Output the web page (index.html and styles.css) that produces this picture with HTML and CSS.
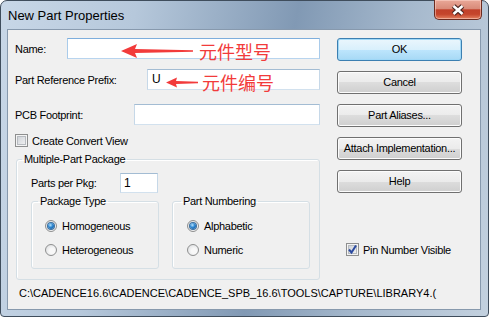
FILE: index.html
```html
<!DOCTYPE html>
<html lang="zh-CN">
<head>
    <meta charset="UTF-8">
    <title>New Part Properties</title>
    <link rel="stylesheet" href="styles.css">
</head>
<body>

<div class="window">
    <div class="titlebar">
        <span class="title">New Part Properties</span>
        <span class="close">
            <svg width="16" height="12" viewBox="0 0 16 12">
                <path d="M3.5 2 L12.5 10 M12.5 2 L3.5 10" stroke="#4a2520" stroke-width="5"/>
                <path d="M3.5 2 L12.5 10 M12.5 2 L3.5 10" stroke="#ffffff" stroke-width="2.6"/>
            </svg>
        </span>
    </div>

    <div class="client">
        <div class="main">
            <div class="form">
                <div class="row">
                    <label>Name:</label>
                    <span class="field field-name"></span>
                </div>
                <div class="row row-prefix">
                    <label>Part Reference Prefix:</label>
                    <span class="field field-prefix">U</span>
                </div>
                <div class="row row-pcb">
                    <label>PCB Footprint:</label>
                    <span class="field field-pcb"></span>
                </div>
                <div class="check-row">
                    <span class="check"></span>
                    <span class="check-text">Create Convert View</span>
                </div>

                <fieldset class="group">
                    <legend>Multiple-Part Package</legend>
                    <div class="pkg-row">
                        <label>Parts per Pkg:</label>
                        <span class="field field-count">1</span>
                    </div>
                    <div class="sub-groups">
                        <fieldset class="sub sub-type">
                            <legend>Package Type</legend>
                            <div class="radio-row first"><span class="radio on"></span>Homogeneous</div>
                            <div class="radio-row"><span class="radio"></span>Heterogeneous</div>
                        </fieldset>
                        <fieldset class="sub sub-num">
                            <legend>Part Numbering</legend>
                            <div class="radio-row first"><span class="radio on"></span>Alphabetic</div>
                            <div class="radio-row"><span class="radio"></span>Numeric</div>
                        </fieldset>
                    </div>
                </fieldset>
            </div>

            <div class="actions">
                <div class="btn btn-default">OK</div>
                <div class="btn">Cancel</div>
                <div class="btn">Part Aliases...</div>
                <div class="btn">Attach Implementation...</div>
                <div class="btn">Help</div>
                <div class="check-row pin-row">
                    <span class="check checked">
                        <svg width="11" height="11" viewBox="0 0 11 11">
                            <path d="M2 5.5 L4.5 8.5 L9 1.5" fill="none" stroke="#2b4aa0" stroke-width="2"/>
                        </svg>
                    </span>
                    <span class="check-text">Pin Number Visible</span>
                </div>
            </div>
        </div>

        <div class="path">C:\CADENCE16.6\CADENCE\CADENCE_SPB_16.6\TOOLS\CAPTURE\LIBRARY4.(</div>
    </div>

    <!-- red notes drawn over the dialog -->
    <div class="note note-name">
        <svg width="72" height="16" viewBox="0 0 72 16">
            <polygon points="0,8 16,1 14,6 72,7.2 72,8.8 14,10 16,15" fill="#f23b3b"/>
        </svg>
        <span>元件型号</span>
    </div>
    <div class="note note-prefix">
        <svg width="32" height="11" viewBox="0 0 32 11">
            <polygon points="0,5.5 11,0.5 10,4 32,4.8 32,6.2 10,7 11,10.5" fill="#f23b3b"/>
        </svg>
        <span>元件编号</span>
    </div>
</div>

</body>
</html>
```

FILE: styles.css
```css
body { margin: 0; background: #fff; font-family: "Liberation Sans", Arial, sans-serif; font-size: 11px; letter-spacing: -0.3px; color: #000; }

.window { position: relative; width: 489px; height: 317px; box-sizing: border-box; padding: 0 7px 0 6px; border: 1px solid #3f4d5c; border-radius: 7px 7px 4px 4px; background: linear-gradient(100deg, #c8d7e7 0%, #b6c8db 25%, #8199b4 55%, #a6b9cd 76%, #c3d1df 100%); }

.titlebar { height: 28px; display: flex; justify-content: space-between; }
.title { padding-left: 1px; margin-top: 7px; font-size: 13px; letter-spacing: 0; line-height: 15px; }
.close { width: 48px; height: 20px; margin: -1px -1px 0 0; box-sizing: border-box; display: flex; align-items: center; justify-content: center; border: 1px solid #6b2b20; border-top: none; border-radius: 0 0 5px 5px; background: linear-gradient(#e9a898 0%, #d98b79 45%, #c1412a 52%, #c5452c 75%, #e3805f 100%); box-shadow: inset 0 0 0 1px rgba(255, 220, 210, 0.5); }

.client { height: 281px; box-sizing: border-box; padding: 8px 0 0 7px; background: #f0f0f0; border: 1px solid #8799ad; }
.main { display: flex; }
.form { width: 305px; }
.actions { width: 125px; margin-left: 17px; display: flex; flex-direction: column; }

.row { display: flex; align-items: center; height: 21px; }
.row-prefix { margin-top: 10px; }
.row-pcb { margin-top: 14px; }
.field { margin-left: auto; height: 21px; box-sizing: border-box; padding-left: 4px; border: 1px solid; border-color: #a3bcd3 #c6d8e8 #d2e1ee #c6d8e8; background: #fff; font-size: 12px; line-height: 19px; letter-spacing: 0; }
.field-name { width: 253px; border-color: #7eaedc #a9cbea #b8d4ee #a9cbea; }
.field-prefix { width: 173px; }
.field-pcb { width: 186px; }

.check-row { display: flex; align-items: center; height: 13px; margin-top: 9px; }
.check { position: relative; width: 13px; height: 13px; box-sizing: border-box; border: 1px solid #8e8f8f; background: linear-gradient(135deg, #c9cdd3, #f6f6f6); box-shadow: inset 0 0 0 1px #f4f4f4, inset 0 0 0 2px #b7bbc0; }
.check svg { position: absolute; left: 0; top: 0; }
.check-text { margin-left: 4px; }

.group { margin: 6px 0 0 1px; padding: 0; width: 304px; height: 127px; box-sizing: border-box; border: 1px solid #d5dfe5; border-radius: 3px; box-shadow: inset 1px 1px 0 #fff; }
.group legend { margin-left: 5px; padding: 0 2px; line-height: 13px; }

.pkg-row { display: flex; align-items: center; margin: 7px 0 0 14px; }
.pkg-row label { width: 89px; }
.field-count { margin-left: 0; width: 38px; height: 20px; padding-left: 3px; }

.sub-groups { display: flex; margin-top: 2px; }
.sub { margin: 0; padding: 0; height: 74px; box-sizing: border-box; border: 1px solid #d5dfe5; border-radius: 3px; box-shadow: inset 1px 1px 0 #fff; }
.sub legend { padding: 0 2px; line-height: 13px; }
.sub-type { width: 128px; margin-left: 14px; }
.sub-type legend { margin-left: 6px; }
.sub-num { width: 138px; margin-left: 13px; }
.sub-num legend { margin-left: 8px; }

.radio-row { display: flex; align-items: center; height: 14px; margin-top: 10px; padding-left: 13px; }
.radio-row.first { margin-top: 11px; }
.sub-num .radio-row { padding-left: 14px; }
.radio { width: 12px; height: 12px; margin-right: 5px; box-sizing: border-box; border: 1px solid #8e8f8f; border-radius: 50%; background: radial-gradient(circle at 60% 60%, #f8f8f8 30%, #d6d8db 100%); display: flex; align-items: center; justify-content: center; }
.radio.on::after { content: ""; width: 6px; height: 6px; border-radius: 50%; background: radial-gradient(circle at 40% 35%, #b9e4fd 0%, #2a84cf 45%, #0d4c8d 100%); box-shadow: 0 0 0 1px #3c6f9e; }

.btn { height: 23px; margin-bottom: 10px; box-sizing: border-box; border: 1px solid #707070; border-radius: 3px; background: linear-gradient(#f3f3f3 0%, #ebebeb 50%, #dddddd 50%, #cfcfcf 100%); box-shadow: inset 0 0 0 1px #fcfcfc; text-align: center; line-height: 21px; }
.btn-default { border-color: #3c7fb1; background: linear-gradient(#eaf6fd 0%, #d9f0fc 50%, #bee6fd 50%, #a7d9f5 100%); box-shadow: inset 0 0 0 1px #9fd8f7; }

.pin-row { margin: 40px 0 0 9px; }

.path { margin-top: 7px; padding-left: 4px; white-space: nowrap; line-height: 13px; letter-spacing: 0; }

.note { position: absolute; display: flex; align-items: center; color: #f23b3b; font-family: "Noto Sans CJK SC", sans-serif; font-size: 18px; letter-spacing: 0; line-height: 18px; }
.note-name { left: 120px; top: 41px; }
.note-name span { margin-left: 6px; }
.note-prefix { left: 165px; top: 72px; }
.note-prefix span { margin-left: 4px; }
```
